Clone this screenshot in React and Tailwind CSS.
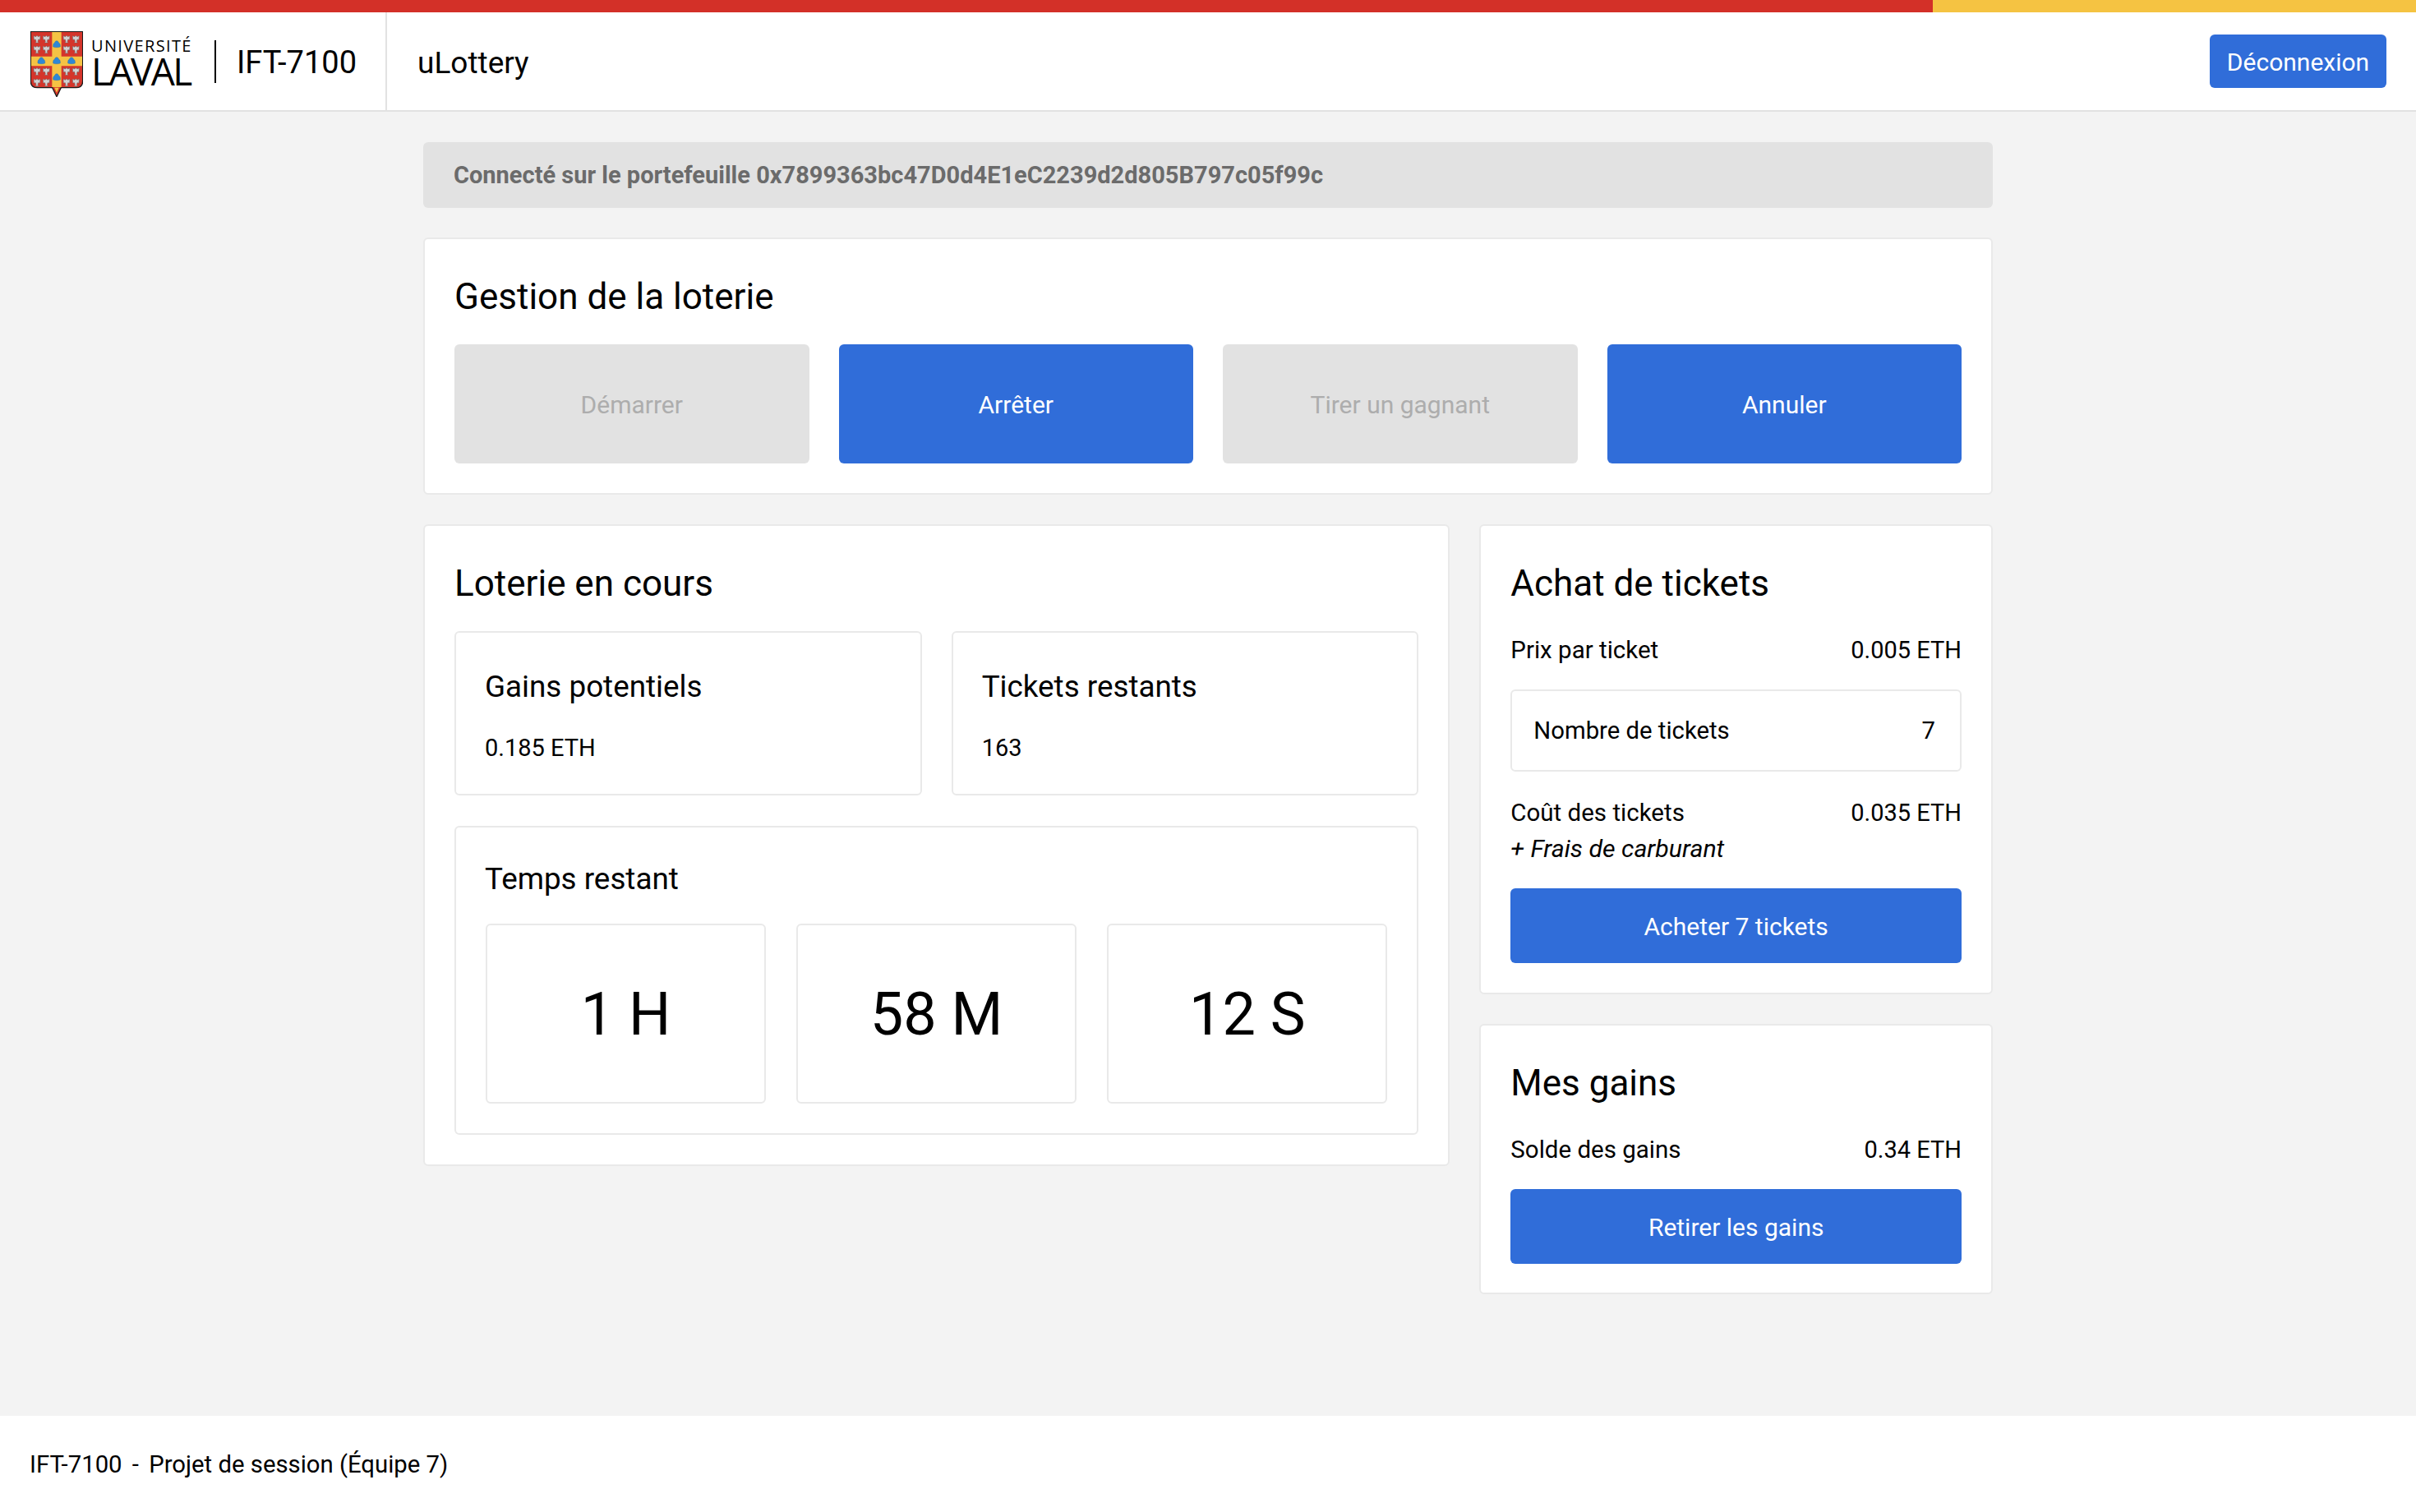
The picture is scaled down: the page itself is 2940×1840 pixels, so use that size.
const eagles = [[76,68],[110,68],[184,68],[218,68],[76,106],[110,106],[184,106],[218,106],[76,186],[110,186],[184,186],[218,186],[76,226],[110,226],[184,226],[218,226]];
const shells = [[148,88],[92,148],[148,148],[202,148],[148,208]];

function Shield() {
  return (
    <svg width="64" height="80" viewBox="52 40 192 240" className="mt-[7px] shrink-0">
      <path d="M53 41H243V222Q243 246 219 246H164L148 279L132 246H77Q53 246 53 222Z" fill="#d5352b" stroke="#1a1a1a" strokeWidth="4" />
      <path d="M131 43H165V132H241V167H165V244H148H131V167H55V132H131Z" fill="#f5c344" />
      <path d="M140 246H156L148 264Z" fill="#f5c344" />
      {eagles.map(([x, y], i) => (
        <g key={i} transform={`translate(${x} ${y})`}>
          <path d="M0 -13L4 -8L12 -11L11 3L5 2L3 10L6 14H-6L-3 10L-5 2L-11 3L-12 -11L-4 -8Z" fill="#d2d2d2" stroke="#666666" strokeWidth="1.5" />
        </g>
      ))}
      {shells.map(([x, y], i) => (
        <path key={i} transform={`translate(${x} ${y})`} d="M0 -13C5 -13 7 -8 8 -5C12 -4 14 2 13 9C6 12 -6 12 -13 9C-14 2 -12 -4 -8 -5C-7 -8 -5 -13 0 -13Z" fill="#2f87d6" stroke="#1d5f9e" strokeWidth="1" />
      ))}
    </svg>
  );
}

function Card({ className = "", children }) {
  return <section className={`rounded-[6px] border-2 border-[#e9e9e9] bg-white ${className}`}>{children}</section>;
}

function Heading({ children }) {
  return <h2 className="mb-[30px] pt-[6px] text-[44px] leading-[56px]">{children}</h2>;
}

function Action({ disabled, className = "", children }) {
  return (
    <button className={`flex items-center justify-center rounded-[6px] pt-[2px] text-[30px] ${disabled ? "bg-[#e2e2e2] text-[#adadad]" : "bg-[#306dd9] text-white"} ${className}`}>
      {children}
    </button>
  );
}

function Row({ children, value, className = "" }) {
  return (
    <div className={`flex justify-between pt-[1px] text-[29.5px] leading-[44px] ${className}`}>
      <span>{children}</span>
      <span className="text-[29px]">{value}</span>
    </div>
  );
}

function Stat({ title, value }) {
  return (
    <div className="h-[200px] rounded-[6px] border-2 border-[#e9e9e9] px-[35px] pt-[42px]">
      <h3 className="mb-[28px] text-[36.8px] leading-[48px]">{title}</h3>
      <p className="text-[29px] leading-[44px]">{value}</p>
    </div>
  );
}

function Time({ children }) {
  return (
    <div className="flex h-[219px] items-center justify-center rounded-[6px] border-2 border-[#e9e9e9] pt-[3px] text-[72px]">
      {children}
    </div>
  );
}

export default function App() {
  return (
    <div className="flex min-h-[1840px] flex-col bg-[#f3f3f3] font-['Roboto',sans-serif] text-black">
      <div className="flex h-[15px]">
        <div className="w-4/5 bg-[#d33028]" />
        <div className="w-1/5 bg-[#f5c342]" />
      </div>
      <header className="flex h-[121px] items-center justify-between border-b-2 border-[#e2e2e2] bg-white pr-[36px]">
        <div className="flex h-full items-center">
          <div className="flex h-full w-[471px] items-center border-r-2 border-[#e2e2e2] pl-[37px]">
            <Shield />
            <div className="ml-[10px] flex w-[123px] flex-col font-['Open_Sans',sans-serif]">
              <span className="text-[20px] leading-[22px] tracking-[1.35px] whitespace-nowrap">UNIVERSITÉ</span>
              <span className="text-[46px] leading-[38px] tracking-[-2.6px] whitespace-nowrap">LAVAL</span>
            </div>
            <div className="ml-[27px] h-[52px] w-[2px] bg-black" />
            <span className="ml-[25px] pt-[4px] text-[38px]">IFT-7100</span>
          </div>
          <span className="ml-[37px] pt-[4px] text-[37px]">uLottery</span>
        </div>
        <Action className="h-[65px] w-[215px]">Déconnexion</Action>
      </header>

      <main className="mx-auto flex w-[1910px] flex-1 flex-col pt-[37px]">
        <div className="mb-[36px] flex h-[80px] items-center rounded-[6px] bg-[#e2e2e2] px-[37px] pt-[2px] text-[29px] font-bold text-[#6b6b6b]">
          Connecté sur le portefeuille 0x7899363bc47D0d4E1eC2239d2d805B797c05f99c
        </div>

        <Card className="mb-[36px] p-[36px]">
          <Heading>Gestion de la loterie</Heading>
          <div className="grid h-[145px] grid-cols-4 gap-[36px]">
            <Action disabled>Démarrer</Action>
            <Action>Arrêter</Action>
            <Action disabled>Tirer un gagnant</Action>
            <Action>Annuler</Action>
          </div>
        </Card>

        <div className="grid grid-cols-[2fr_1fr] items-start gap-x-[36px]">
          <Card className="p-[36px]">
            <Heading>Loterie en cours</Heading>
            <div className="mb-[37px] grid grid-cols-2 gap-[36px]">
              <Stat title="Gains potentiels" value="0.185 ETH" />
              <Stat title="Tickets restants" value="163" />
            </div>
            <div className="rounded-[6px] border-2 border-[#e9e9e9] p-[36px] pl-[35px]">
              <h3 className="mb-[30px] pt-[3px] text-[36.8px] leading-[48px]">Temps restant</h3>
              <div className="ml-px grid grid-cols-3 gap-[37px]">
                <Time>1 H</Time>
                <Time>58 M</Time>
                <Time>12 S</Time>
              </div>
            </div>
          </Card>

          <div className="flex flex-col gap-[36px]">
            <Card className="p-[36px]">
              <Heading>Achat de tickets</Heading>
              <Row value="0.005 ETH" className="mb-[26px]">Prix par ticket</Row>
              <div className="mb-[27px] flex h-[100px] items-center justify-between rounded-[6px] border-2 border-[#e9e9e9] pl-[26px] pr-[30px] pt-[2px] text-[29.3px]">
                <span>Nombre de tickets</span>
                <span>7</span>
              </div>
              <Row value="0.035 ETH">Coût des tickets</Row>
              <p className="mb-[26px] text-[30.3px] leading-[44px] italic">+ Frais de carburant</p>
              <Action className="h-[91px] w-full">Acheter 7 tickets</Action>
            </Card>
            <Card className="p-[36px] pb-[35px]">
              <Heading>Mes gains</Heading>
              <Row value="0.34 ETH" className="mb-[26px]">Solde des gains</Row>
              <Action className="h-[91px] w-full">Retirer les gains</Action>
            </Card>
          </div>
        </div>
      </main>

      <footer className="flex h-[117px] items-center bg-white px-[36px] pt-[2px] text-[29.3px]">
        <span className="whitespace-pre [word-spacing:5px]">IFT-7100 - Projet</span>
        <span className="whitespace-pre"> de session (Équipe 7)</span>
      </footer>
    </div>
  );
}
